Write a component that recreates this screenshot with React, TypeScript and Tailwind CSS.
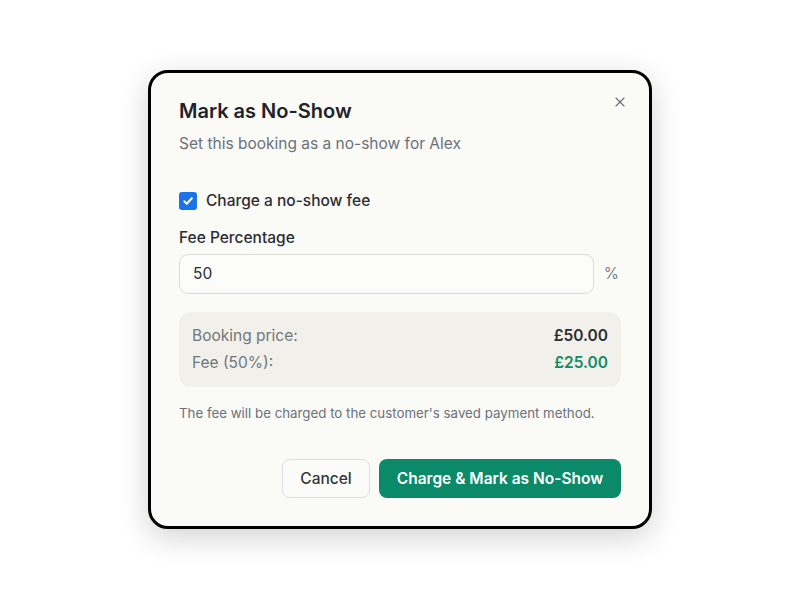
import { X } from "lucide-react";

const rows = [
  { label: "Booking price:", value: "£50.00", tone: "text-[#2b2d31]" },
  { label: "Fee (50%):", value: "£25.00", tone: "text-[#138a68]" },
];

const App = () => {
  return (
    <div className="w-[800px] h-[600px] bg-white flex items-center justify-center font-['Inter',sans-serif]">
      <div className="relative w-[504px] h-[459px] mt-[-1px] border-[3px] border-black rounded-[20px] bg-[#fafaf7] shadow-[0_8px_30px_rgba(0,0,0,0.18)] px-7 pt-6 pb-7 flex flex-col">
        <button className="absolute top-[21px] right-[21px] text-[#6b6f76]">
          <X size={16} strokeWidth={1.75} />
        </button>

        <h2 className="text-[20px] leading-[28px] font-semibold text-[#1f2328]">Mark as No-Show</h2>
        <p className="mt-2 text-[15.5px] leading-[22px] text-[#6c717a]">Set this booking as a no-show for Alex</p>

        <label className="mt-[35px] flex items-center gap-[9px]">
          <span className="w-[18px] h-[18px] rounded-[3px] bg-[#1a73e8] flex items-center justify-center">
            <svg width="12" height="12" viewBox="0 0 12 12" fill="none">
              <path d="M2.3 6.3 L4.8 8.7 L9.8 3.3" stroke="white" strokeWidth="2" strokeLinecap="round" strokeLinejoin="round" />
            </svg>
          </span>
          <span className="text-[15.5px] leading-[22px] font-medium text-[#2b2d31]">Charge a no-show fee</span>
        </label>

        <p className="mt-[15px] text-[15.5px] leading-[22px] font-medium text-[#2b2d31]">Fee Percentage</p>
        <div className="mt-[5px] flex items-center gap-[10px]">
          <div className="flex-1 h-[40px] rounded-[9px] border border-[#dcdcd6] bg-[#fcfcfa] px-[13px] flex items-center text-[15.5px] text-[#2b2d31]">
            50
          </div>
          <span className="pr-[2px] text-[15.5px] text-[#7a7e86]">%</span>
        </div>

        <div className="mt-[18px] rounded-[12px] bg-[#f1f0ea] px-[13px] py-[13px] flex flex-col gap-[5px]">
          {rows.map((row) => (
            <div key={row.label} className="flex justify-between text-[15.5px] leading-[22px]">
              <span className="text-[#72767e]">{row.label}</span>
              <span className={`font-semibold ${row.tone}`}>{row.value}</span>
            </div>
          ))}
        </div>

        <p className="mt-4 text-[13.3px] leading-[20px] text-[#6c717a]">
          The fee will be charged to the customer's saved payment method.
        </p>

        <div className="mt-auto flex justify-end gap-[9px]">
          <button className="w-[88px] h-[39px] rounded-[8px] border border-[#dedede] bg-[#fbfbf9] text-[15.5px] font-medium text-[#33363b]">
            Cancel
          </button>
          <button className="w-[242px] h-[39px] rounded-[8px] bg-[#0b8a6a] text-[15.5px] font-semibold text-white">
            Charge &amp; Mark as No-Show
          </button>
        </div>
      </div>
    </div>
  );
};

export default App;
